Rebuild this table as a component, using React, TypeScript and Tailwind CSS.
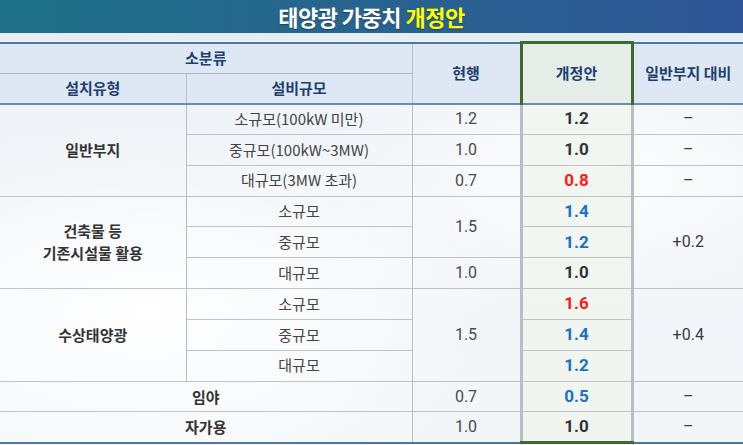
import React from "react";

const numFont = "font-['Roboto','Noto_Sans_CJK_KR',sans-serif]";
const krFont = "font-['Noto_Sans_CJK_KR','Noto_Sans',sans-serif]";

const td = "border-y border-[#bfc3c7] border-x border-x-[#b9bec3] text-center align-middle p-0";
const green = "border-x-[3px] border-x-[#3f6a2b] bg-[#f0f5ee]/80";

function Num({ v, color }: { v: string; color: string }) {
  return <span className={`${numFont} font-bold text-[17px] ${color}`}>{v}</span>;
}

export default function App() {
  const cur = (v: string, rowSpan?: number) => (
    <td rowSpan={rowSpan} className={`${td} ${numFont} text-[16px] text-[#4a4a4a]`}>{v}</td>
  );
  const nw = (v: string, color: string, last?: boolean) => (
    <td className={`${td} ${green} ${last ? "border-b-[3px] border-b-[#3f6a2b]" : ""}`}>
      <Num v={v} color={color} />
    </td>
  );
  const cmp = (v: string, rowSpan?: number) => (
    <td rowSpan={rowSpan} className={`${td} border-r-0 ${numFont} text-[16px] text-[#3a3a3a]`}>{v}</td>
  );
  const size = (v: string) => (
    <td className={`${td} ${krFont} text-[15px] text-[#444]`}>{v}</td>
  );
  const cat = (v: React.ReactNode, rowSpan?: number, colSpan?: number) => (
    <td rowSpan={rowSpan} colSpan={colSpan} className={`${td} border-l-0 ${krFont} font-bold text-[15px] leading-[22px] text-[#333]`}>{v}</td>
  );
  const dark = "text-[#333]";
  const red = "text-[#ff1a1a]";
  const blue = "text-[#1572c4]";
  const dash = "–";
  const row = "h-[30.85px]";

  return (
    <div className="w-[743px] h-[445px] overflow-hidden bg-[#f1f5f8] bg-[radial-gradient(ellipse_at_20%_70%,#ffffff_0%,transparent_45%),radial-gradient(ellipse_at_80%_40%,#fbfcfd_0%,transparent_40%),linear-gradient(to_bottom,#edf2f7,#f3f6f9)]">
      <div className={`h-[33px] bg-gradient-to-r from-[#1c7086] to-[#2f5597] flex items-center justify-center ${krFont} font-bold text-[22px] tracking-[-0.5px] text-white [text-shadow:0_1px_1px_rgba(0,0,0,0.35)]`}>
        <span>태양광 가중치&nbsp;</span>
        <span className="text-[#ffff00]">개정안</span>
      </div>
      <div className="h-[8px] bg-[#e6eef5]" />
      <table className="w-[743px] border-collapse table-fixed">
        <colgroup>
          <col className="w-[186px]" />
          <col className="w-[226px]" />
          <col className="w-[109px]" />
          <col className="w-[111px]" />
          <col className="w-[111px]" />
        </colgroup>
        <thead className={`${krFont} font-bold text-[15px] text-[#1d3e6e]`}>
          <tr className="h-[30.5px] bg-[#dde8f4]">
            <th colSpan={2} className="border-t-2 border-t-[#4f75a3] border-b border-b-[#aeb6c0] border-r border-r-[#b9bec3] font-bold">소분류</th>
            <th rowSpan={2} className="border-t-2 border-t-[#4f75a3] border-b-2 border-b-[#6d8cb2] border-x border-x-[#b9bec3] font-bold">현행</th>
            <th rowSpan={2} className="border-t-[3px] border-x-[3px] border-t-[#3f6a2b] border-x-[#3f6a2b] border-b-2 border-b-[#6d8cb2] bg-[#e4ede8] font-bold">개정안</th>
            <th rowSpan={2} className="border-t-2 border-t-[#4f75a3] border-b-2 border-b-[#6d8cb2] border-r-0 font-bold">일반부지 대비</th>
          </tr>
          <tr className="h-[30.5px] bg-[#dde8f4]">
            <th className="border-b-2 border-b-[#6d8cb2] border-r border-r-[#b9bec3] font-bold">설치유형</th>
            <th className="border-b-2 border-b-[#6d8cb2] border-x border-x-[#b9bec3] font-bold">설비규모</th>
          </tr>
        </thead>
        <tbody>
          <tr className={row}>
            {cat("일반부지", 3)}
            {size("소규모(100kW 미만)")}
            {cur("1.2")}
            {nw("1.2", dark)}
            {cmp(dash)}
          </tr>
          <tr className={row}>
            {size("중규모(100kW~3MW)")}
            {cur("1.0")}
            {nw("1.0", dark)}
            {cmp(dash)}
          </tr>
          <tr className={row}>
            {size("대규모(3MW 초과)")}
            {cur("0.7")}
            {nw("0.8", red)}
            {cmp(dash)}
          </tr>
          <tr className={row}>
            {cat(<>건축물 등<br />기존시설물 활용</>, 3)}
            {size("소규모")}
            {cur("1.5", 2)}
            {nw("1.4", blue)}
            {cmp("+0.2", 3)}
          </tr>
          <tr className={row}>
            {size("중규모")}
            {nw("1.2", blue)}
          </tr>
          <tr className={row}>
            {size("대규모")}
            {cur("1.0")}
            {nw("1.0", dark)}
          </tr>
          <tr className={row}>
            {cat("수상태양광", 3)}
            {size("소규모")}
            {cur("1.5", 3)}
            {nw("1.6", red)}
            {cmp("+0.4", 3)}
          </tr>
          <tr className={row}>
            {size("중규모")}
            {nw("1.4", blue)}
          </tr>
          <tr className={row}>
            {size("대규모")}
            {nw("1.2", blue)}
          </tr>
          <tr className={row}>
            {cat("임야", 1, 2)}
            {cur("0.7")}
            {nw("0.5", blue)}
            {cmp(dash)}
          </tr>
          <tr className={`${row} border-b-2 border-b-[#4f75a3]`}>
            {cat("자가용", 1, 2)}
            {cur("1.0")}
            {nw("1.0", dark, true)}
            {cmp(dash)}
          </tr>
        </tbody>
      </table>
    </div>
  );
}
